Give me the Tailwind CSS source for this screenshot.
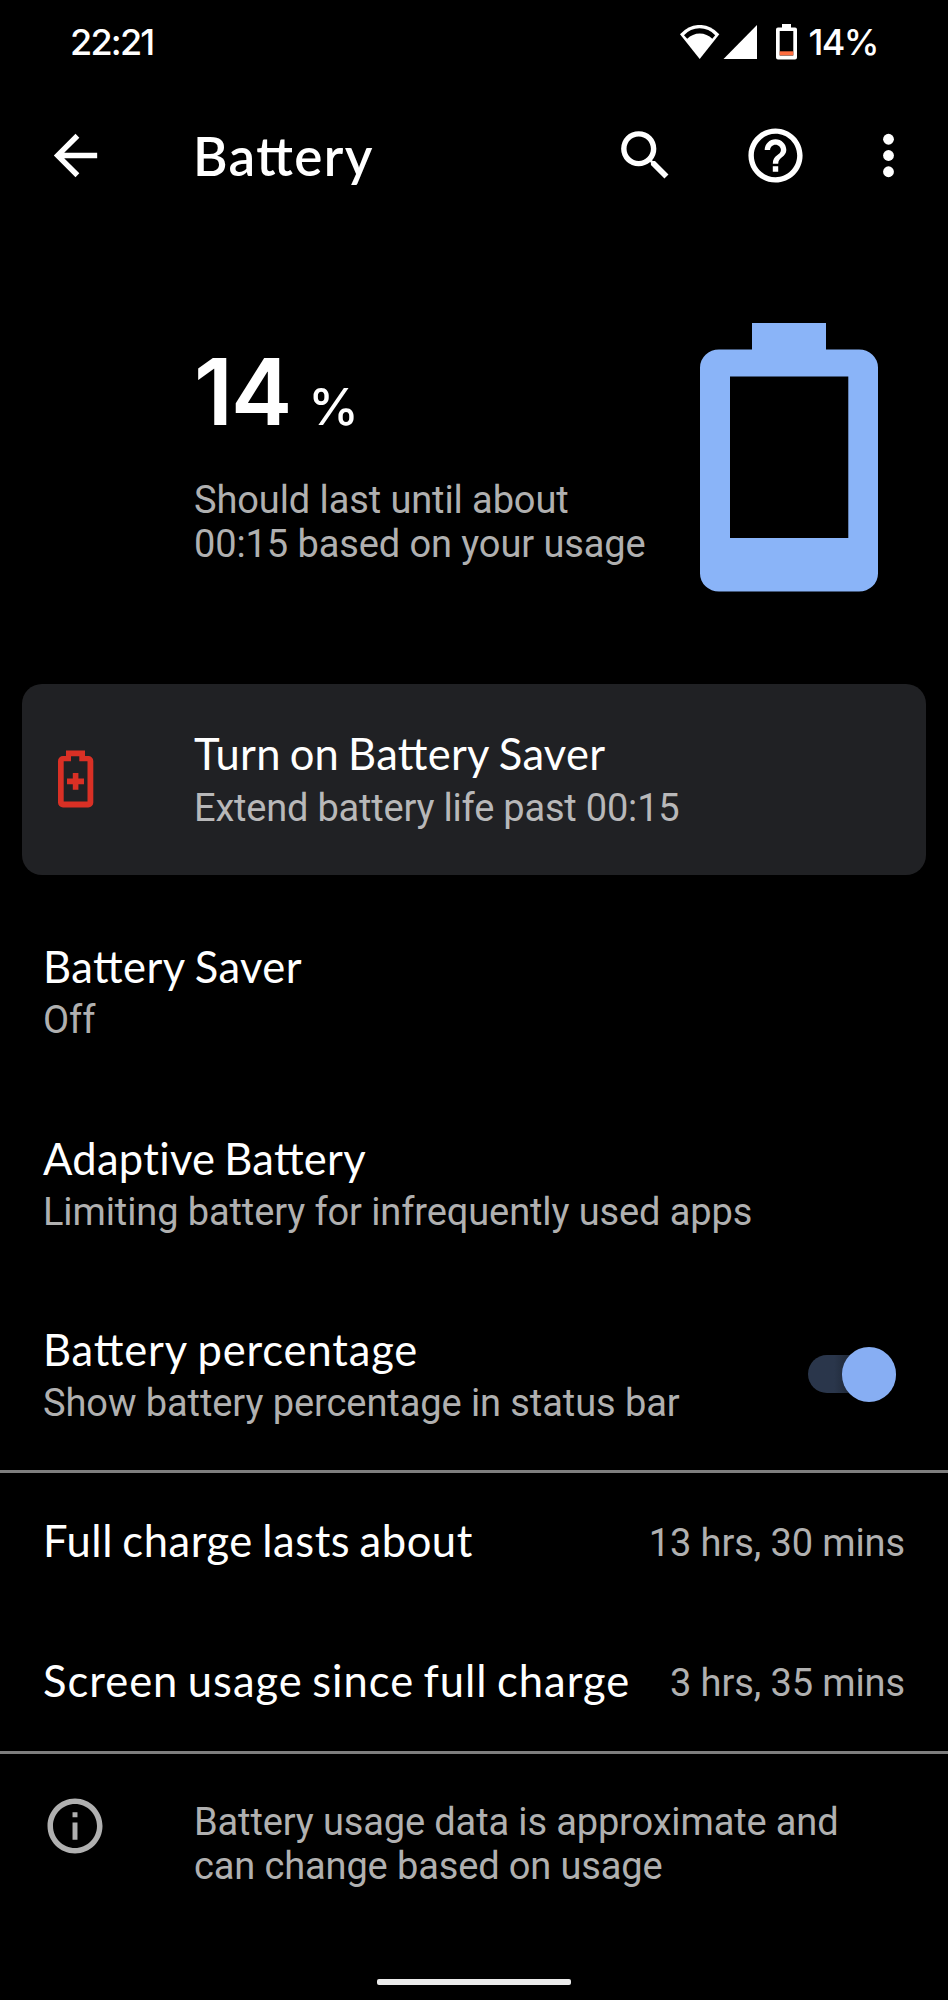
<!DOCTYPE html>
<html lang="en">
<head>
<meta charset="utf-8">
<title>Battery</title>
<script src="https://cdn.jsdelivr.net/npm/@tailwindcss/browser@4"></script>
</head>
<body class="bg-black">
<div class="w-[948px] h-[2000px] bg-black text-white font-['Lato',sans-serif] flex flex-col overflow-hidden">

  <!-- Status bar -->
  <header class="h-[84px] shrink-0 flex items-center justify-between pl-[70px] pr-[70px] font-['Inter',sans-serif] font-medium text-[36px] leading-[40px]">
    <span class="tracking-[-1.8px]">22:21</span>
    <div class="flex items-center">
      <svg class="w-[42px] h-[35px]" viewBox="0 0 42 35"><path fill="#fff" d="M1 9.3A25.3 25.3 0 0 1 40.3 9.3L20.7 34Z"/><path d="M5 10.3A20.7 20.7 0 0 1 36.2 10.3L33.3 13.7A18 18 0 0 0 8.2 13.7Z"/></svg>
      <svg class="w-[34px] h-[35px] ml-[2px]" viewBox="0 0 34 35"><path fill="#fff" d="M34 0V34H.5Z"/></svg>
      <svg class="w-[21px] h-[36px] ml-[19px]" viewBox="0 0 21 36"><path fill="#fff" fill-rule="evenodd" d="M6 0h9v3.5h4a2 2 0 0 1 2 2V33.500a2 2 0 0 1-2 2H2a2 2 0 0 1-2-2V5.500a2 2 0 0 1 2-2h4ZM3.700 7V31.500H17.300V7Z"/><path fill="#ff6e40" d="M3.700 27.300h13.600v4H3.700z"/></svg>
      <span class="ml-[11px] tracking-[-1.6px]">14%</span>
    </div>
  </header>

  <!-- App bar -->
  <div class="h-[143px] mb-px shrink-0 flex items-center pl-[43px] pr-[27px]">
    <svg class="w-[65px] h-[65px]" viewBox="0 0 24 24" fill="#fff"><path d="M20 11H7.830l5.590-5.590L12 4l-8 8 8 8 1.410-1.410L7.830 13H20v-2z"/></svg>
    <h1 class="ml-[85px] text-[53px] leading-[64px] font-semibold tracking-[1.400px] [font-feature-settings:'liga'_1]">Battery</h1>
    <svg class="ml-auto w-[65px] h-[65px]" viewBox="0 0 24 24" fill="#fff"><path d="M15.500 14h-.79l-.28-.27A6.471 6.471 0 0 0 16 9.500 6.500 6.500 0 1 0 9.500 16c1.610 0 3.090-.59 4.230-1.570l.27.28v.79l5 4.990L20.490 19l-4.990-5zm-6 0C7.010 14 5 11.990 5 9.500S7.010 5 9.500 5 14 7.010 14 9.500 11.990 14 9.500 14z"/></svg>
    <svg class="ml-[65px] w-[65px] h-[65px]" viewBox="0 0 24 24" fill="#fff"><path d="M11 18h2v-2h-2v2zm1-16C6.480 2 2 6.480 2 12s4.480 10 10 10 10-4.480 10-10S17.520 2 12 2zm0 18c-4.410 0-8-3.590-8-8s3.590-8 8-8 8 3.590 8 8-3.590 8-8 8zm0-14c-2.210 0-4 1.790-4 4h2c0-1.100.9-2 2-2s2 .9 2 2c0 2-3 1.750-3 5h2c0-2.250 3-2.500 3-5 0-2.210-1.790-4-4-4z"/></svg>
    <svg class="ml-[48px] w-[65px] h-[65px]" viewBox="0 0 24 24" fill="#fff"><circle cx="12" cy="6" r="2"/><circle cx="12" cy="12" r="2"/><circle cx="12" cy="18" r="2"/></svg>
  </div>

  <!-- Charge summary -->
  <section class="h-[455px] shrink-0 flex justify-between pl-[194px] pr-[70px]">
    <div class="pt-[118px] whitespace-nowrap">
      <div class="font-['Inter',sans-serif] h-[92px] flex items-baseline leading-[92px]">
        <span class="text-[92px] font-semibold tracking-[-2px]">14</span>
        <span class="text-[51px] font-medium ml-[18px]">%</span>
      </div>
      <p class="mt-[40px] font-['Roboto',sans-serif] text-[38px] tracking-[-0.100px] leading-[44px] text-[#b0b0b0]">Should last until about<br>00:15 based on your usage</p>
    </div>
    <svg class="mt-[95px] w-[178px] h-[269px]" viewBox="0 0 178 269"><path fill="#8ab4f8" fill-rule="evenodd" d="M52 0h74v26.500h33a19 18 0 0 1 19 18V250.500a19 18 0 0 1-19 18H19a19 18 0 0 1-19-18V44.500a19 18 0 0 1 19-18h33ZM30 53.500V215H148.300V53.500Z"/></svg>
  </section>

  <!-- Battery saver suggestion -->
  <section class="h-[191px] shrink-0 mt-[0.500px] mx-[22px] rounded-[20px] bg-[#202124] flex items-center pl-[36px] whitespace-nowrap">
    <svg class="w-[36px] h-[58px]" viewBox="0 0 36 58"><path fill="#d93025" fill-rule="evenodd" d="M8 .5h19V6h3.300a5 5 0 0 1 5 5V52.500a5 5 0 0 1-5 5H5a5 5 0 0 1-5-5V11a5 5 0 0 1 5-5h3ZM13 6.300v5H5.700V51.500H29.500V11.300H21.300V6.300Z"/><path fill="#d93025" d="M14.800 23h5.600v5.600H26v5.600h-5.600v5.600h-5.600v-5.600H9v-5.600h5.800z"/></svg>
    <div class="ml-[100px]">
      <h2 class="text-[43.500px] leading-[52px] tracking-[0.300px] [word-spacing:-2.500px]">Turn on <span class="[font-feature-settings:'liga'_1]">Battery</span> Saver</h2>
      <p class="mt-[7px] mb-px font-['Roboto',sans-serif] text-[38px] tracking-[-0.200px] leading-[44px] text-[#b8b8b9]">Extend battery life past 00:15</p>
    </div>
  </section>

  <!-- Preferences -->
  <main class="mt-[21px] shrink-0 whitespace-nowrap">
    <div class="h-[191.500px] flex flex-col justify-center px-[43px]">
      <h2 class="mt-px text-[43.500px] leading-[52px] tracking-[0.450px] [word-spacing:-2.500px]"><span class="[font-feature-settings:'liga'_1]">Battery</span> Saver</h2>
      <p class="mt-[6px] mb-px font-['Roboto',sans-serif] text-[38px] tracking-[-0.100px] leading-[44px] text-[#b0b0b0]">Off</p>
    </div>
    <div class="h-[191.500px] flex flex-col justify-center px-[43px]">
      <h2 class="mt-px text-[43.500px] leading-[52px] tracking-[0.300px] [word-spacing:-2.500px]">Adaptive <span class="[font-feature-settings:'liga'_1]">Battery</span></h2>
      <p class="mt-[6px] mb-px font-['Roboto',sans-serif] text-[38px] tracking-[-0.110px] leading-[44px] text-[#b0b0b0]">Limiting battery for infrequently used apps</p>
    </div>
    <div class="h-[191.500px] flex items-center justify-between pl-[43px] pr-[52px]">
      <div>
        <h2 class="mt-px text-[43.500px] leading-[52px] tracking-[0.850px] [word-spacing:-2.500px]"><span class="[font-feature-settings:'liga'_1]">Battery</span> percentage</h2>
        <p class="mt-[6px] mb-px font-['Roboto',sans-serif] text-[38px] tracking-[-0.080px] leading-[44px] text-[#b0b0b0]">Show battery percentage in status bar</p>
      </div>
      <div class="w-[88px] h-[38px] rounded-full bg-linear-to-r from-[#2a364b] from-30% to-[#1d2634] to-50% flex items-center justify-end">
        <div class="size-[54.500px] shrink-0 rounded-full bg-[#87aef3]"></div>
      </div>
    </div>
    <div class="h-[141px] border-t-3 border-[#7e7e7e] pt-[41px] flex items-start justify-between pl-[43px] pr-[43px]">
      <h2 class="text-[43.500px] leading-[52px] tracking-[0.550px] [word-spacing:-2.300px]">Full charge lasts about</h2>
      <span class="mt-[7px] font-['Roboto',sans-serif] text-[38px] tracking-[-0.100px] leading-[44px] text-[#b0b0b0]">13 hrs, 30 mins</span>
    </div>
    <div class="h-[140px] pt-[43px] flex items-start justify-between pl-[43px] pr-[43px]">
      <h2 class="text-[43.500px] leading-[52px] tracking-[1px] [word-spacing:-2.700px]">Screen usage since full charge</h2>
      <span class="mt-[7px] font-['Roboto',sans-serif] text-[38px] tracking-[-0.100px] leading-[44px] text-[#b0b0b0]">3 hrs, 35 mins</span>
    </div>
  </main>

  <!-- Footer note -->
  <footer class="border-t-3 border-[#7e7e7e] flex-1 flex flex-col items-center">
    <div class="w-full pl-[42px] pt-[39px] flex items-start">
      <svg class="w-[66px] h-[66px]" viewBox="0 0 24 24" fill="#b0b0b0"><path d="M11.100 7h1.800v1.800h-1.800zm0 3.700h1.800V17h-1.800zM12 2C6.480 2 2 6.480 2 12s4.480 10 10 10 10-4.480 10-10S17.520 2 12 2zm0 18c-4.410 0-8-3.590-8-8s3.590-8 8-8 8 3.590 8 8-3.590 8-8 8z"/></svg>
      <p class="ml-[86px] mt-[7px] font-['Roboto',sans-serif] text-[38px] tracking-[-0.130px] leading-[44px] text-[#b0b0b0]">Battery usage data is approximate and<br>can change based on usage</p>
    </div>
    <div class="mt-auto mb-[15px] w-[194px] h-[6px] rounded-[2px] bg-[#ebebeb]"></div>
  </footer>
</div>
</body>
</html>
